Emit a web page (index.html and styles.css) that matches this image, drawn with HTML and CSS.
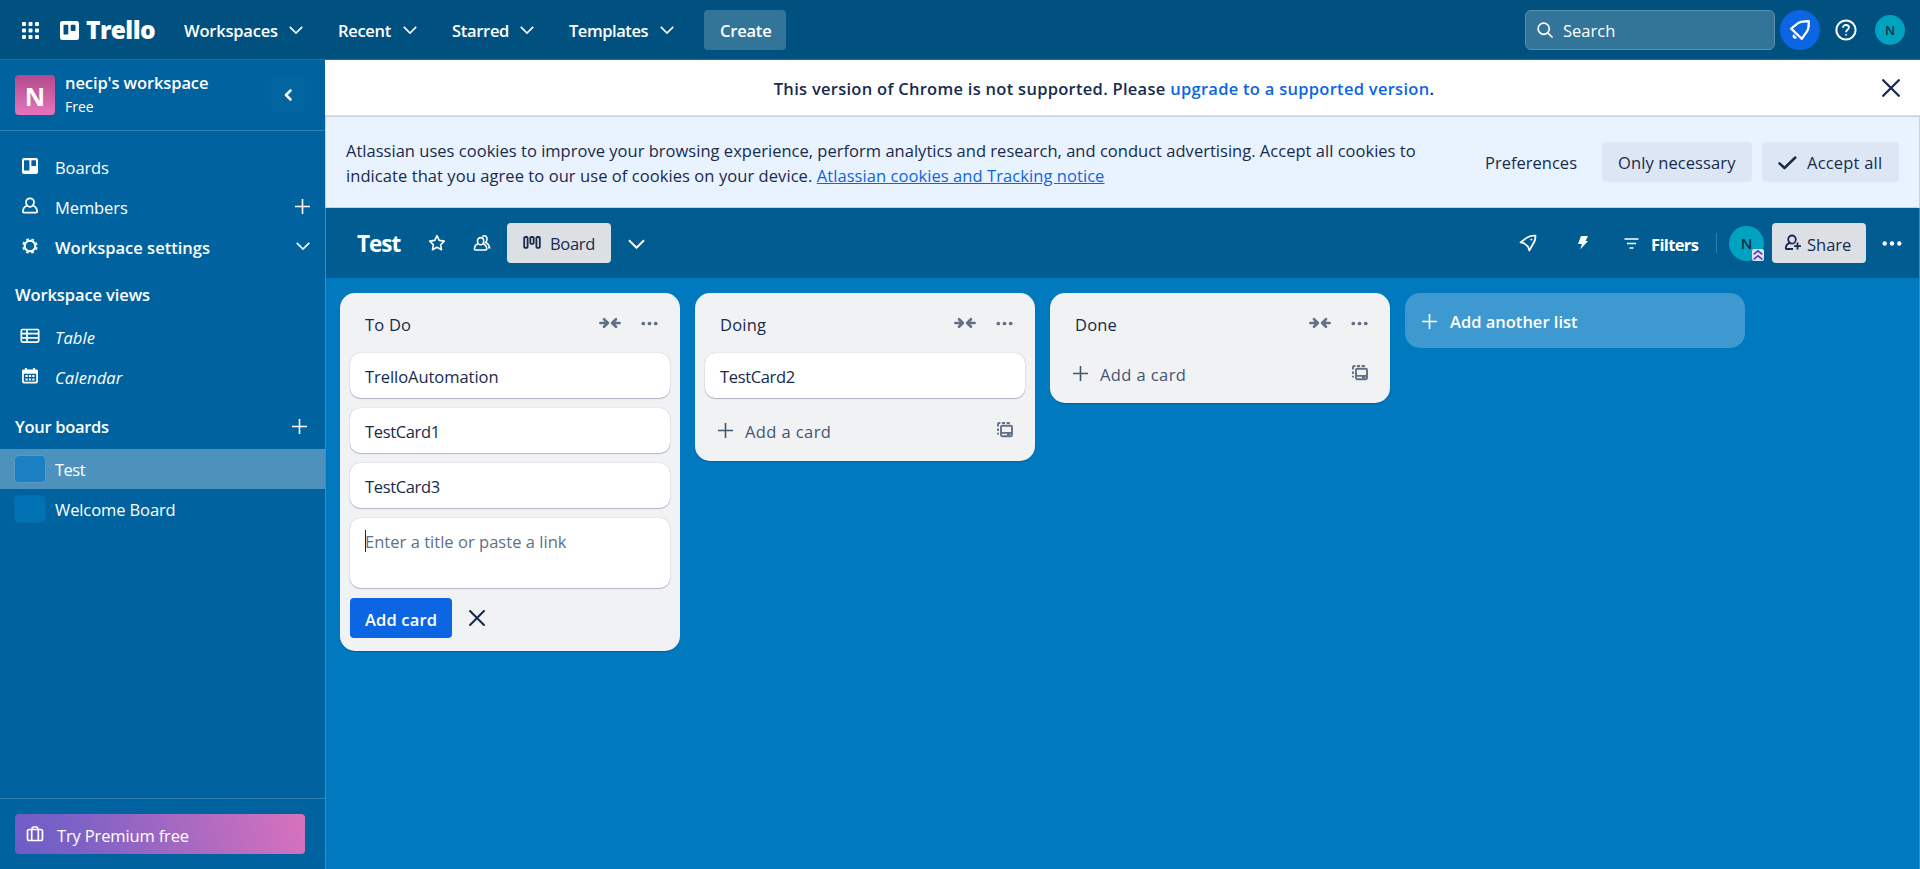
FILE: index.html
```html
<!DOCTYPE html>
<html lang="en">
<head>
<meta charset="utf-8">
<title>Test | Trello</title>
<link rel="stylesheet" href="styles.css">
</head>
<body>
<svg class="defs" width="0" height="0">
  <symbol id="chevron" viewBox="0 0 14 8"><path d="M.8.9 7 7.1 13.2.9" fill="none" stroke="currentColor" stroke-width="1.6"/></symbol>
  <symbol id="plus" viewBox="0 0 15 15"><path d="M7.5 0v15M0 7.5h15" stroke="currentColor" stroke-width="1.6"/></symbol>
  <symbol id="cross" viewBox="0 0 18 18"><path d="M1.2 1.2l15.6 15.6M16.8 1.2 1.2 16.8" stroke="currentColor" stroke-width="2.3" stroke-linecap="round"/></symbol>
  <symbol id="dots" viewBox="0 0 20 5"><circle cx="2.7" cy="2.5" r="2.2" fill="currentColor"/><circle cx="10" cy="2.5" r="2.2" fill="currentColor"/><circle cx="17.3" cy="2.5" r="2.2" fill="currentColor"/></symbol>
  <symbol id="collapse" viewBox="0 0 22 12"><path d="M1.400 6h7.3M5 2.200l3.900 3.800L5 9.800M20.600 6h-7.3M17 2.200 13.100 6l3.900 3.800" fill="none" stroke="currentColor" stroke-width="2.600" stroke-linecap="round" stroke-linejoin="round"/></symbol>
  <symbol id="template" viewBox="0 0 16 16"><rect x="4" y="3.7" width="11" height="10.6" rx="1.2" fill="none" stroke="currentColor" stroke-width="1.9"/><path d="M4 10.9h11M10 12.600h3.500" stroke="currentColor" stroke-width="1.800"/><path d="M1 12.500V10.700M1 9.100V6.400M1 4.600V2.200Q1 1 2.200 1H3.400M5 1H8M9.600 1H12.800" fill="none" stroke="currentColor" stroke-width="1.9"/></symbol>
</svg>

<header class="topbar">
  <svg class="apps" viewBox="0 0 17 17" fill="currentColor"><path d="M1 0h2a1 1 0 0 1 1 1v2a1 1 0 0 1-1 1H1a1 1 0 0 1-1-1V1a1 1 0 0 1 1-1zM7.500 0h2a1 1 0 0 1 1 1v2a1 1 0 0 1-1 1h-2a1 1 0 0 1-1-1V1a1 1 0 0 1 1-1zM14 0h2a1 1 0 0 1 1 1v2a1 1 0 0 1-1 1h-2a1 1 0 0 1-1-1V1a1 1 0 0 1 1-1zM1 6.500h2a1 1 0 0 1 1 1v2a1 1 0 0 1-1 1H1a1 1 0 0 1-1-1v-2a1 1 0 0 1 1-1zM7.500 6.500h2a1 1 0 0 1 1 1v2a1 1 0 0 1-1 1h-2a1 1 0 0 1-1-1v-2a1 1 0 0 1 1-1zM14 6.500h2a1 1 0 0 1 1 1v2a1 1 0 0 1-1 1h-2a1 1 0 0 1-1-1v-2a1 1 0 0 1 1-1zM1 13h2a1 1 0 0 1 1 1v2a1 1 0 0 1-1 1H1a1 1 0 0 1-1-1v-2a1 1 0 0 1 1-1zM7.500 13h2a1 1 0 0 1 1 1v2a1 1 0 0 1-1 1h-2a1 1 0 0 1-1-1v-2a1 1 0 0 1 1-1zM14 13h2a1 1 0 0 1 1 1v2a1 1 0 0 1-1 1h-2a1 1 0 0 1-1-1v-2a1 1 0 0 1 1-1z"/></svg>
  <div class="logo">
    <svg width="19" height="19" viewBox="0 0 19 19"><path fill="currentColor" fill-rule="evenodd" d="M2.500 0h14A2.500 2.500 0 0 1 19 2.500v14a2.500 2.500 0 0 1-2.500 2.500h-14A2.500 2.500 0 0 1 0 16.500v-14A2.500 2.500 0 0 1 2.500 0zM4.300 3.700a.8.8 0 0 0-.8.8v8.300c0 .4.4.8.8.8h3.200c.4 0 .8-.4.8-.8V4.500a.8.8 0 0 0-.8-.8zM11.500 3.700a.8.8 0 0 0-.8.8v4.700c0 .4.4.8.8.8h3.200c.4 0 .8-.4.8-.8V4.500a.8.8 0 0 0-.8-.8z"/></svg>
    <span class="wordmark">Trello</span>
  </div>
  <nav class="menu">
    <a class="m1">Workspaces<svg class="chev"><use href="#chevron"/></svg></a>
    <a class="m2">Recent<svg class="chev"><use href="#chevron"/></svg></a>
    <a class="m3">Starred<svg class="chev"><use href="#chevron"/></svg></a>
    <a class="m4">Templates<svg class="chev"><use href="#chevron"/></svg></a>
  </nav>
  <button class="create">Create</button>
  <div class="search">
    <svg width="16" height="16" viewBox="0 0 16 16" fill="none" stroke="currentColor" stroke-width="1.700"><circle cx="6.700" cy="6.700" r="5.600"/><path d="M10.800 10.800l4.200 4.200" stroke-linecap="round"/></svg>
    <span>Search</span>
  </div>
  <div class="bell"><svg width="40" height="40" viewBox="0 0 40 40" fill="none" stroke="currentColor" stroke-width="2.300" stroke-linejoin="round" stroke-linecap="round"><path d="M11.200 18.600 18 13.200C21.500 10.600 25 11.700 28.700 11.200 28.700 15 29.300 18 27 21.400L21.700 28.800z"/><path d="M13.800 25.600c-.3 1.300.5 2.100 1.700 1.900"/></svg></div>
  <svg class="help" viewBox="0 0 22 22" fill="none" stroke="currentColor" stroke-width="2"><circle cx="11" cy="11" r="9.600"/><path d="M8 8.700C8 6.900 9.300 6 11 6s3 1 3 2.600c0 2-2.900 2-2.900 4.600" stroke-width="1.800"/><circle cx="11.100" cy="15.800" r=".6" stroke-width="1"/></svg>
  <div class="avatar">N</div>
</header>

<div class="shell">
  <aside class="sidebar">
    <div class="ws">
      <div class="ws-logo">N</div>
      <div class="ws-text"><b>necip's workspace</b><span>Free</span></div>
      <div class="ws-back"><svg width="8" height="12" viewBox="0 0 8 12"><path d="M6.500 1.500 2 6l4.500 4.500" fill="none" stroke="currentColor" stroke-width="2.500" stroke-linecap="round" stroke-linejoin="round"/></svg></div>
    </div>
    <div class="nav">
      <div class="row"><svg class="ic" viewBox="0 0 20 20"><path fill="currentColor" fill-rule="evenodd" d="M4 2h12a2 2 0 0 1 2 2v12a2 2 0 0 1-2 2H4a2 2 0 0 1-2-2V4a2 2 0 0 1 2-2zM4 4.200V14.400H9.400V4.200zM11.400 4.200V10H16V4.200z"/></svg><span>Boards</span></div>
      <div class="row"><svg class="ic" viewBox="0 0 20 20" fill="none" stroke="currentColor" stroke-width="1.700"><path d="M10 2.300a4 4 0 0 1 4 4c0 2.200-1.700 4.600-4 4.600s-4-2.400-4-4.600a4 4 0 0 1 4-4z"/><path d="M6.700 9.800C4 11 3 13 2.800 15.400c0 .8.400 1.200 1.100 1.200h12.200c.7 0 1.100-.4 1.100-1.200C17 13 16 11 13.300 9.800"/></svg><span>Members</span><svg class="plus"><use href="#plus"/></svg></div>
      <div class="row strong"><svg class="ic" viewBox="0 0 20 20" fill="none" stroke="currentColor"><circle cx="10" cy="10" r="5.300" stroke-width="2"/><circle cx="10" cy="10" r="6.900" stroke-width="1.700" stroke-dasharray="2.700 2.719" stroke-dashoffset="-1.300"/></svg><span>Workspace settings</span><svg class="chev"><use href="#chevron"/></svg></div>
      <h3 class="views">Workspace views</h3>
      <div class="row it"><svg class="ic" viewBox="0 0 20 20" fill="none" stroke="currentColor" stroke-width="1.700"><rect x="1.300" y="3.500" width="17.400" height="12.600" rx="1.300"/><path d="M1.300 7.700h17.400M1.300 11.900h17.400M7 3.500v12.600"/></svg><span>Table</span></div>
      <div class="row it"><svg class="ic" viewBox="0 0 20 20"><path fill="currentColor" fill-rule="evenodd" d="M5 2h2v1.500h6V2h2v1.500h1.500A1.500 1.500 0 0 1 18 5v10.500a2 2 0 0 1-2 2H4a2 2 0 0 1-2-2V5a1.500 1.500 0 0 1 1.500-1.500H5zM3.800 7.700V15c0 .5.300.8.800.8h10.800c.5 0 .8-.3.800-.8V7.700z"/><path d="M5.500 10h9M5.500 13.500h9" stroke="currentColor" stroke-width="2.200" stroke-dasharray="2.200 1.200"/></svg><span>Calendar</span></div>
      <h3 class="boards">Your boards<svg class="plus"><use href="#plus"/></svg></h3>
      <div class="row board active"><i class="thumb"></i><span>Test</span></div>
      <div class="row board"><i class="thumb"></i><span>Welcome Board</span></div>
    </div>
    <div class="side-foot">
      <div class="premium"><svg width="18" height="18" viewBox="0 0 18 18" fill="none" stroke="currentColor" stroke-width="1.700"><rect x="1.500" y="4.500" width="15" height="11" rx="1.800"/><path d="M5.700 4.500v11M12.300 4.500v11M6.200 4.500V3.200Q6.200 2 7.400 2h3.200q1.200 0 1.200 1.200v1.300"/></svg><span>Try Premium free</span></div>
    </div>
  </aside>

  <main class="main">
    <div class="banner"><p>This version of Chrome is not supported. Please <a>upgrade to a supported version</a>.</p><svg class="close"><use href="#cross"/></svg></div>
    <div class="cookies">
      <p>Atlassian uses cookies to improve your browsing experience, perform analytics and research, and conduct advertising. Accept all cookies to<br><span class="line2">indicate that you agree to our use of cookies on your device. <a>Atlassian cookies and Tracking notice</a></span></p>
      <span class="pref">Preferences</span>
      <button class="only">Only necessary</button>
      <button class="accept"><svg width="19" height="14" viewBox="0 0 19 14"><path d="M1.500 7.300 6.500 12 17.300 1.500" fill="none" stroke="currentColor" stroke-width="2.500" stroke-linecap="round" stroke-linejoin="round"/></svg>Accept all</button>
    </div>
    <section class="board-view">
      <div class="board-head">
        <h1>Test</h1>
        <svg class="star" viewBox="0 0 18 18"><path d="M9 1.700l2.200 4.700 5.100.7-3.700 3.600.9 5.100L9 13.300l-4.500 2.500.9-5.100L1.700 7.100l5.100-.7z" fill="none" stroke="currentColor" stroke-width="1.600" stroke-linejoin="round"/></svg>
        <svg class="people" viewBox="0 0 18 18" fill="none" stroke="currentColor" stroke-width="1.600"><path d="M7.600 3.600a3.100 3.100 0 0 1 3.100 3.100c0 2-1.300 4-3.100 4s-3.100-2-3.100-4a3.100 3.100 0 0 1 3.100-3.100z"/><path d="M5 9.800C2.700 10.600 1.600 12.600 1.400 15c0 .6.300 1 .9 1h10.600c.6 0 .9-.4.9-1-.2-2.400-1.300-4.400-3.600-5.200"/><path d="M9.300 2.400c3-1.700 5.300.6 4.600 3.500-.2 1-.6 1.900-1.300 2.500 2.300.8 3.600 2.500 4.100 5.400H15"/></svg>
        <button class="view"><svg width="18" height="14" viewBox="0 0 18 14" fill="none" stroke="currentColor" stroke-width="1.800"><rect x="1.200" y="1" width="3.400" height="10.800" rx=".9"/><rect x="7.300" y="1" width="3.400" height="6.800" rx=".9"/><rect x="13.400" y="1" width="3.400" height="10.800" rx=".9"/></svg>Board</button>
        <svg class="head-chev"><use href="#chevron"/></svg>
        <div class="grow"></div>
        <svg class="rocket" viewBox="0 0 18 18" fill="none" stroke="currentColor" stroke-width="1.700" stroke-linejoin="round"><path d="M1.500 8.500 6.800 4.400C10.300 1.700 13.500 1.400 16.500 1.500c.1 3-.5 6.300-2.900 9.300L10.300 16.500 9 12.600 5.300 9.300z"/><path d="M12.300 5.600h.2" stroke-width="1.900" stroke-linecap="round"/></svg>
        <svg class="bolt" viewBox="0 0 12 16"><path d="M4 1h7L8.500 6H11L3.200 14.500 5 9H1z" fill="currentColor"/></svg>
        <div class="filters"><svg width="15" height="11" viewBox="0 0 15 11" stroke="currentColor" stroke-width="1.600"><path d="M.5 1h14M3 5.500h9M5.500 10h4"/></svg>Filters</div>
        <i class="sep"></i>
        <div class="member">N<svg class="rank" viewBox="0 0 12 12"><rect width="12" height="12" rx="2" fill="#dfe1f3"/><path d="M1.700 5.400 6 1.900l4.300 3.500M1.700 10.300 6 6.800l4.300 3.500" fill="none" stroke="#4c3fb5" stroke-width="1.600"/></svg></div>
        <button class="share"><svg width="18" height="18" viewBox="0 0 18 18" fill="none" stroke="currentColor" stroke-width="1.800"><path d="M8 1.500a3.800 3.800 0 0 1 3.800 3.800c0 2-1.400 4.400-3.600 4.400S4.200 7.500 4.200 5.300A3.800 3.800 0 0 1 8 1.500zM5.500 8.900C3.200 9.800 1.900 11.700 1.700 14c0 .7.300 1 .9 1H9M13.500 8.600v7M10 12.100h7"/></svg>Share</button>
        <svg class="more"><use href="#dots"/></svg>
      </div>
      <div class="lists">
        <div class="list">
          <div class="list-head"><h2>To Do</h2><svg class="col"><use href="#collapse"/></svg><svg class="dots"><use href="#dots"/></svg></div>
          <div class="card">TrelloAutomation</div>
          <div class="card tc">TestCard1</div>
          <div class="card tc">TestCard3</div>
          <div class="card entry"><i class="caret"></i>Enter a title or paste a link</div>
          <div class="actions"><button class="add">Add card</button><svg class="cancel"><use href="#cross"/></svg></div>
        </div>
        <div class="list">
          <div class="list-head"><h2>Doing</h2><svg class="col"><use href="#collapse"/></svg><svg class="dots"><use href="#dots"/></svg></div>
          <div class="card tc">TestCard2</div>
          <div class="new"><svg class="plus"><use href="#plus"/></svg><span>Add a card</span><svg class="tpl"><use href="#template"/></svg></div>
        </div>
        <div class="list">
          <div class="list-head"><h2>Done</h2><svg class="col"><use href="#collapse"/></svg><svg class="dots"><use href="#dots"/></svg></div>
          <div class="new first"><svg class="plus"><use href="#plus"/></svg><span>Add a card</span><svg class="tpl"><use href="#template"/></svg></div>
        </div>
        <div class="add-list"><svg class="plus"><use href="#plus"/></svg>Add another list</div>
      </div>
    </section>
  </main>
</div>
</body>
</html>
```
FILE: styles.css
```css
*{box-sizing:border-box}
body{margin:0;width:1920px;height:869px;overflow:hidden;display:flex;flex-direction:column;font:16.5px/25px "Open Sans","Noto Sans",sans-serif;color:#172b4d;background:#0079bf}
svg{flex:none;display:block}
.defs{position:absolute}
h1,h2,h3,p{margin:0}
button{font:inherit;color:inherit;border:0;border-radius:4px;height:40px;padding:0 16px;display:flex;align-items:center;flex:none;white-space:nowrap}
.chev{width:14px;height:8px}
.plus{width:15px;height:15px}

.topbar{height:60px;flex:none;background:#005180;border-bottom:1px solid #2a6c93;color:#fff;display:flex;align-items:center;padding:1px 15px 0 22px}
.apps{width:17px;height:17px}
.logo{display:flex;align-items:center;gap:7px;margin-left:21px;width:124px}
.wordmark{font-size:24.5px;line-height:30px;font-weight:800;letter-spacing:-.6px}
.menu{display:flex;font-weight:600;letter-spacing:-.2px}
.menu a{display:flex;align-items:center;justify-content:space-between}
.menu .m1{width:119px;margin-right:35px}
.menu .m2{width:79px;margin-right:35px;letter-spacing:-.3px}
.menu .m3{width:82px;margin-right:35px;letter-spacing:-.3px}
.menu .m4{width:105px;letter-spacing:-.45px}
.create{background:#337499;font-weight:600;margin-left:30px;width:82px;letter-spacing:-.2px}
.search{margin-left:auto;width:250px;height:40px;border:1px solid #5a8fae;border-radius:6px;background:#337499;display:flex;align-items:center;gap:10px;padding-left:11px}
.search span{padding-top:1px}
.bell{width:40px;height:40px;border-radius:50%;background:#0c66e4;margin-left:5px}
.help{width:22px;height:22px;margin:0 18px 0 15px}
.avatar{width:30px;height:30px;border-radius:50%;background:#00a3bf;color:#172b4d;font-size:13px;font-weight:600;text-align:center;line-height:30px}

.shell{display:flex;flex:1;min-height:0}
.sidebar{width:325px;flex:none;background:#0063a0;color:#fff;display:flex;flex-direction:column}
.ws{height:71px;border-bottom:1px solid #2f7fb1;display:flex;align-items:center;padding:0 20px 0 15px}
.ws-logo{width:40px;height:40px;border-radius:4px;background:linear-gradient(#b24a8b,#e774bb);font-size:25px;font-weight:700;text-align:center;line-height:43px}
.ws-text{margin-left:10px;display:flex;flex-direction:column;flex:1}
.ws-text b{font-weight:600;line-height:24px;letter-spacing:-.1px;margin-top:-1px}
.ws-text span{font-size:14px;line-height:22px;margin-top:1px}
.ws-back{width:34px;height:34px;display:flex;align-items:center;justify-content:center;background:#02659f;border-radius:3px}
.nav{padding-top:16px;flex:1}
.row{height:40px;display:flex;align-items:center;padding:0 15px 0 20px}
.row .ic{width:20px;height:20px;margin-right:15px;position:relative;top:-1px}
.row span{flex:1;letter-spacing:-.1px}
.row .plus,.row .chev{position:relative;top:-1px}
.strong,.nav h3{font-weight:600}
.strong span{letter-spacing:0}
.nav h3{font-size:16.5px;padding:0 18px 0 15px;display:flex;justify-content:space-between;align-items:center;letter-spacing:-.1px}
.views{height:50px;padding-top:5px!important}
.boards{height:52px;padding-top:6px!important;letter-spacing:-.3px!important}
.it{font-style:italic}
.it span{letter-spacing:.15px}
.board{padding-left:15px}
.active{background:#4d92bc}
.thumb{width:30px;height:26px;border-radius:4px;background:#0071b3;margin-right:10px;box-shadow:0 0 0 1px #0a69a8}
.active .thumb{background:#1a80c3;box-shadow:0 0 0 1px #5a9ac2}
.active span{letter-spacing:-.5px}
.board span{position:relative}
.side-foot{height:71px;border-top:1px solid #2f7fb1;padding:15px 20px 0 15px}
.premium{height:40px;border-radius:4px;background:linear-gradient(72deg,#6e5dc6,#7a61c6 20%,#e774bb 112%);display:flex;align-items:center;gap:13px;padding-left:11px}
.premium span{letter-spacing:-.15px;padding-top:2px}

.main{flex:1;display:flex;flex-direction:column;min-width:0}
.banner{height:56px;background:#fff;border-bottom:1px solid #dcdfe4;display:flex;align-items:center;justify-content:center;position:relative;flex:none}
.banner p{font-weight:600;letter-spacing:.28px;padding:2px 37px 0 0}
.banner a{color:#0c66e4}
.banner .close{position:absolute;right:20px;top:19px;width:18px;height:18px}
.cookies{height:92px;background:#e9f2ff;border:1px solid #c7d1e2;display:flex;align-items:center;padding:0 20px;flex:none;white-space:nowrap}
.cookies p{flex:1;letter-spacing:.02px;padding-top:2px}
.line2{letter-spacing:.07px}
.cookies a{color:#0c66e4;text-decoration:underline}
.cookies .pref,.only,.accept{font-weight:500}
.pref{margin-right:25px}
.only{background:#dde6f5;width:150px;margin-right:10px;letter-spacing:.1px}
.accept{background:#dde6f5;width:137px;gap:10px;letter-spacing:.2px}
.cookies .accept svg{margin-top:2px}

.board-view{flex:1;border:solid #2f90cb;border-width:0 1px;background:#0079bf;display:flex;flex-direction:column}
.board-head{height:70px;background:#005c91;color:#fff;display:flex;align-items:center;padding:0 17px 0 31px}
h1{font-size:22.5px;font-weight:700;line-height:30px;letter-spacing:-1px;width:71px;padding-top:2px}
.star{width:18px;height:18px}
.people{width:18px;height:18px;margin:0 16px 0 27px}
.view{background:#dcdfe4;color:#172b4d;width:104px;gap:9px;font-weight:500;letter-spacing:-.3px;padding-top:1px}
.view svg{position:relative;top:-1px}
.head-chev{width:17px;height:10px;margin:2px 0 0 17px}
.grow{flex:1}
.rocket{width:18px;height:18px;margin-right:40px}
.bolt{width:12px;height:16px;margin-right:35px}
.filters{display:flex;align-items:center;gap:12px;font-weight:700;letter-spacing:-.65px;width:92px;padding-top:2px}
.filters svg{position:relative;top:-1px}
.sep{width:1px;height:20px;background:#2f7ba9;margin-right:12px}
.member{width:35px;height:35px;border-radius:50%;background:#00a3bf;color:#172b4d;font-size:15px;font-weight:600;line-height:35px;text-align:center;position:relative;margin-right:8px}
.rank{position:absolute;width:12px;height:12px;right:0;bottom:0}
.share{background:#dcdfe4;color:#172b4d;width:94px;padding:2px 0 0 12px;gap:5px;font-weight:500;margin-right:16px}
.share svg{position:relative;top:-1px}
.more{width:20px;height:5px}
.lists{display:flex;align-items:flex-start;gap:15px;padding:15px 0 0 14px}
.list{width:340px;background:#f1f2f4;border-radius:15px;padding:0 10px 13px;box-shadow:0 1px 1px #091e4240}
.list-head{height:60px;display:flex;align-items:center;padding:3px 2px 0 15px}
h2{font-size:16.5px;font-weight:500;flex:1;letter-spacing:.2px}
.list-head svg{color:#626f86;margin-bottom:3px}
.col{width:22px;height:12px;margin-right:20px}
.dots{width:17px;height:5px;margin-right:10px}
.card{height:45px;background:#fff;border-radius:10px;box-shadow:0 1px 1px #091e4240,0 0 1px #091e424f;padding:11px 15px;margin-bottom:10px;line-height:25px;letter-spacing:-.05px}
.tc{letter-spacing:-.35px}
.entry{height:70px;color:#626f86;position:relative;letter-spacing:.03px}
.caret{position:absolute;left:15px;top:12px;width:1px;height:22px;background:#172b4d}
.actions{display:flex;align-items:center}
.add{background:#0c66e4;color:#fff;width:102px;padding:2px 0 0 15px;font-weight:600;letter-spacing:.15px}
.cancel{width:16px;height:16px;margin-left:17px}
.new{height:40px;display:flex;align-items:center;color:#44546f;padding:0 12px 0 13px;font-weight:500}
.new span{flex:1;padding:7px 0 0 12px;letter-spacing:.4px}
.new .plus{margin-top:5px}
.new .tpl{color:#626f86;width:16px;height:16px;margin-top:4px}
.new.first{margin:-3px 0 0;padding-top:1px}
.add-list{width:340px;height:55px;border-radius:15px;background:#3d99cf;color:#fff;font-weight:600;display:flex;align-items:center;gap:13px;padding:2px 0 0 17px}
.add-list .plus{margin-top:-1px}
```
